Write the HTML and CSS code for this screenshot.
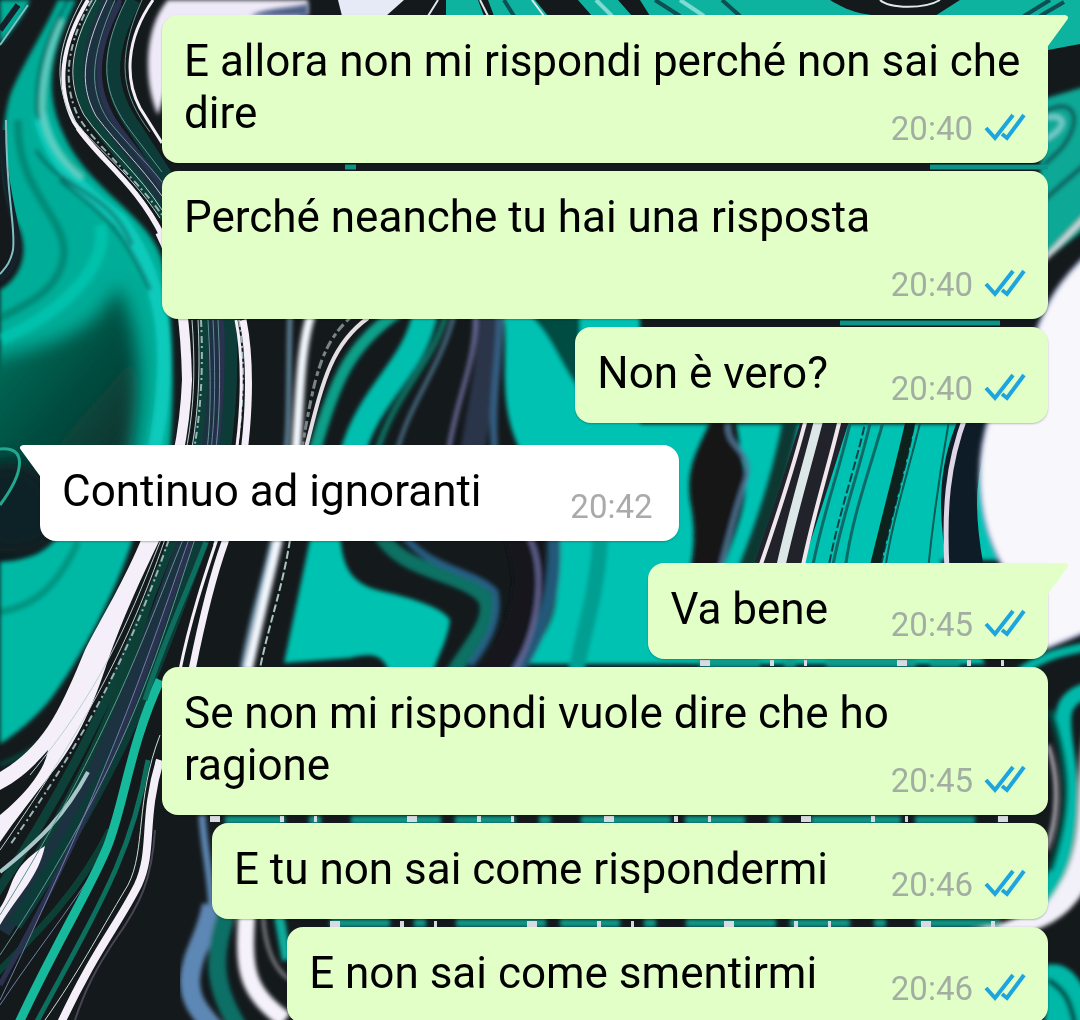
FILE: index.html
```html
<!DOCTYPE html>
<html lang="it">
<head>
<meta charset="utf-8">
<meta name="viewport" content="width=device-width, initial-scale=1">
<title>Chat</title>
<link rel="stylesheet" href="styles.css">
</head>
<body>
<svg class="wallpaper" viewBox="0 0 1080 1020" preserveAspectRatio="xMidYMid slice" aria-hidden="true">
  <defs>
    <filter id="soft" x="-10%" y="-10%" width="120%" height="120%"><feGaussianBlur stdDeviation="2"/></filter>
    <filter id="fine" x="-10%" y="-10%" width="120%" height="120%"><feGaussianBlur stdDeviation="0.7"/></filter>
    <filter id="deep" x="-20%" y="-20%" width="140%" height="140%"><feGaussianBlur stdDeviation="9"/></filter>
    <linearGradient id="pool" x1="0" y1="0" x2="1" y2="1"><stop offset="0" stop-color="#00806e"/><stop offset=".45" stop-color="#045848"/><stop offset="1" stop-color="#0a2b28"/></linearGradient>
  </defs>
  <rect width="1080" height="1020" fill="#14191c"/>

  <!-- upper left: teal river -->
  <g filter="url(#soft)">
    <path fill="#06ad98" d="M0 0H30C22 20 10 32 0 44ZM58 0H76C52 50 42 90 64 135C88 190 150 215 162 260C172 300 176 380 170 450H0V290C25 275 30 245 15 220C0 180 0 120 12 90C25 60 45 30 58 0Z"/>
    <path fill="none" stroke="#008b78" stroke-width="8" d="M18 120C16 190 64 215 64 252C62 290 25 305 0 318"/>
    <path fill="none" stroke="#00c2ac" stroke-width="12" d="M100 225C110 260 70 310 0 340"/>
    <path fill="none" stroke="#08cbbb" stroke-width="14" d="M40 115C50 160 80 190 120 220C150 260 166 310 164 370C162 410 158 430 154 450"/>
    <path fill="none" stroke="#65cfc4" stroke-width="5" d="M62 20C48 50 42 80 42 110C46 140 60 160 82 178"/>
    <path fill="none" stroke="#075f58" stroke-width="3" d="M68 0C42 45 34 80 38 120M36 150C60 190 110 190 132 245M60 180C90 205 120 220 150 290"/>
  </g>
  <path filter="url(#deep)" fill="url(#pool)" d="M-20 362C50 345 95 335 118 285C145 340 142 400 128 470H-20Z"/>
  <path filter="url(#deep)" fill="#0a2326" d="M-20 470C40 440 60 500 60 520C50 560 20 555 -20 552Z"/>
  <g fill="none" filter="url(#fine)">
    <path stroke="#16212c" stroke-width="6" d="M3 130C4 200 20 225 17 250C14 268 6 275 0 280M0 30L18 5"/>
    <path stroke="#80bfc2" stroke-width="2" d="M6 120C6 200 16 225 13 250C10 264 5 268 0 274M0 45L28 5"/>
    <path stroke="#20a88e" stroke-width="3" d="M0 449C26 446 26 470 0 505"/>
  </g>

  <!-- lower left: teal pool -->
  <g filter="url(#soft)">
    <path fill="#04b9a5" d="M0 562C40 560 50 545 60 535H134C118 590 80 660 50 700C35 718 15 735 0 744Z"/>
    <path fill="none" stroke="#009480" stroke-width="7" d="M0 612C40 605 60 580 78 542"/>
    <path fill="none" stroke="#005f4e" stroke-width="3" d="M0 765C50 745 70 720 98 660"/>
  </g>

  <!-- marbled bundle running down the left side -->
  <g fill="none" filter="url(#fine)">
    <path stroke="#1e3040" stroke-width="22" d="M112 0C80 60 85 95 110 130C150 185 210 245 214 330C220 450 205 500 188 542C160 620 120 740 0 930"/>
    <path stroke="#0d3b38" stroke-width="14" d="M134 0C102 60 110 95 136 130C180 200 218 245 230 330C233 440 215 500 202 542C170 620 140 740 15 925"/>
    <path stroke="#0e4138" stroke-width="9" d="M98 0C72 50 74 90 92 120C140 185 200 245 204 330C204 440 190 500 172 542C140 620 100 740 -5 895"/>
    <path stroke="#0c3f35" stroke-width="7" d="M150 600C120 700 80 790 -5 925M110 830C80 890 40 930 -5 975"/>
    <path stroke="#2c3150" stroke-width="5" d="M120 0C90 60 95 95 120 130C160 185 216 245 222 330C224 450 205 520 192 542C160 620 130 750 0 985"/>
    <path stroke="#f4eff8" stroke-width="4" d="M88 0C58 50 58 90 74 122C94 155 135 180 163 235"/>
    <path stroke="#f4eff8" stroke-width="5" d="M78 128C100 160 138 185 163 238"/>
    <path stroke="#f4eff8" stroke-width="10" d="M160 232C180 270 186 330 187 380C185 430 176 480 152 540"/>
    <path fill="#f4eff8" stroke="none" d="M143 535H162C140 580 122 620 108 660C92 710 75 745 50 775C35 795 15 820 0 842V815C25 795 45 770 48 750C35 765 20 780 0 790V772C45 745 60 710 85 650C100 620 125 580 143 535Z"/>
    <path fill="#f4eff8" stroke="none" d="M45 846C38 878 20 892 0 925V908C14 888 8 868 45 846Z"/>
    <path stroke="#a6c6c8" stroke-width="4" d="M0 872C40 840 65 815 88 772"/>
    <path stroke="#bcd1d2" stroke-width="1" d="M82 0C55 50 56 80 68 110C84 140 125 165 160 218M96 0C67 50 68 85 84 115C105 145 140 175 162 210M198 320C202 400 195 470 164 542C130 640 90 720 0 850M192 320C198 400 190 460 160 542C125 630 100 690 30 775M107 0C78 60 82 90 96 116C118 145 140 165 162 196"/>
    <path stroke="#9bb4b6" stroke-width="2" stroke-dasharray="7 3 2 4" d="M201 320C205 400 196 470 168 542C136 635 98 720 10 845M92 0C63 50 64 88 79 118C100 150 136 178 162 215M239 320C250 390 236 480 214 545"/>
    <path stroke="#629493" stroke-width="1" d="M126 0C96 60 104 95 130 130L162 172M142 0C115 60 122 95 150 132M115 0C88 60 90 92 108 120C128 145 145 160 162 182M208 320C215 440 205 490 182 542C150 620 110 740 0 915M218 320C224 440 212 490 194 542C158 650 130 760 0 955"/>
    <path stroke="#6f7ea4" stroke-width="1" d="M213 320C219 440 208 490 188 542C155 635 120 750 0 1000M120 820C95 880 50 930 0 1005"/>
    <path stroke="#17b99b" stroke-width="9" d="M160 680C130 745 125 800 108 845C90 890 60 935 18 1025"/>
    <path stroke="#08705f" stroke-width="5" d="M206 542C180 610 160 650 145 700M148 760C132 850 108 890 35 1025"/>
    <path stroke="#f4eff8" stroke-width="3" d="M153 0C125 40 125 80 140 108L162 143M236 320C248 380 238 480 216 542C205 575 190 620 180 670"/>
    <path stroke="#f4eff8" stroke-width="7" d="M243 320C255 380 246 480 225 542C213 575 202 620 192 670"/>
    <path stroke="#f4eff8" stroke-width="8" d="M160 760C142 820 154 850 138 885C118 925 95 950 60 1025"/>
    <path stroke="#c8dcda" stroke-width="1" d="M160 735C135 800 146 850 128 885C95 940 80 970 45 1020"/>
    <path stroke="#494454" stroke-width="2" d="M155 830C152 880 140 905 115 940C95 970 85 990 75 1020"/>
  </g>
  <path filter="url(#soft)" fill="#eeeaf8" d="M168 0H308V15H300V90H166L158 115C142 80 145 25 168 0Z"/>
  <path filter="url(#soft)" fill="#4d5f86" d="M250 16C265 8 290 8 308 4V16Z"/>
  <path filter="url(#fine)" fill="none" stroke="#e9e4ee" stroke-width="5" d="M172 166H196"/>

  <!-- top edge, above the first message -->
  <g filter="url(#fine)">
    <path fill="#e6e9f6" d="M338 0H404L386 16H342Z"/>
    <path fill="#11b39f" d="M446 0H478L484 16H446ZM488 0H535L548 16H494ZM578 0H618L632 16H592ZM640 0H830C850 12 860 14 880 16H650ZM960 0H1080V44L1048 50V16H935Z"/>
    <path fill="none" stroke="#dfe8ec" stroke-width="2" d="M438 0L428 16M480 0L488 16M532 0L544 16M880 0C890 9 925 9 940 0"/>
    <path fill="none" stroke="#7ddbd2" stroke-width="4" d="M596 0L612 16M680 0L704 16"/>
    <path fill="none" stroke="#0b4f52" stroke-width="4" d="M504 0L514 16M655 0L680 16M722 0L740 16M1024 16L1050 0M1040 16L1064 2"/>
  </g>

  <!-- central swirls -->
  <g filter="url(#soft)" fill="none">
    <path fill="#02c2b3" d="M503 310H640V424H1000V560H940L985 664H520C570 620 570 560 520 450C495 400 510 350 503 310Z"/>
    <path stroke="#6e9ab4" stroke-width="4" d="M290 315C288 380 290 440 284 460C280 540 250 610 242 670"/>
    <path stroke="#f3f8ff" stroke-width="9" d="M312 312C300 345 300 400 296 450C285 520 270 570 248 670"/>
    <path stroke="#08a089" stroke-width="12" d="M398 312C350 345 335 380 315 450"/>
    <path stroke="#04bfae" stroke-width="25" d="M426 310C415 370 370 390 352 455"/>
    <path stroke="#087060" stroke-width="6" d="M447 312C430 370 395 390 376 455"/>
    <path stroke="#5686a2" stroke-width="3" d="M455 312C440 370 410 400 396 455"/>
    <path stroke="#2a344a" stroke-width="24" d="M488 310C492 360 480 400 472 455"/>
    <path stroke="#6e6e9e" stroke-width="4" d="M475 310C478 360 455 400 448 455"/>
    <path stroke="#365f83" stroke-width="7" d="M500 310C500 360 490 400 495 455"/>
    <path fill="#064c42" d="M530 315H580V390C560 365 555 340 530 315Z"/>
    <path fill="#02c2b0" d="M311 535H340C343 570 352 585 385 592C420 600 445 610 450 620C448 640 438 655 430 680H392C385 655 375 652 350 658L284 663Z"/>
    <path stroke="#14191c" stroke-width="34" d="M520 530C540 590 530 620 490 680"/>
    <path stroke="#245878" stroke-width="13" d="M553 530C558 590 545 630 512 680"/>
    <path stroke="#67689a" stroke-width="4" d="M525 530C545 560 545 620 510 680"/>
    <path stroke="#087164" stroke-width="15" d="M378 530C400 575 460 570 485 598C495 620 470 645 452 675"/>
    <path stroke="#265f84" stroke-width="7" d="M400 530C425 570 475 570 495 592C500 615 490 640 470 665"/>
    <path stroke="#009f91" stroke-width="16" d="M600 540C597 600 580 640 575 680"/>
  </g>
  <g filter="url(#fine)" fill="none">
    <path stroke="#e3dfe4" stroke-width="4" d="M368 318C330 345 322 385 306 448"/>
    <path stroke="#7d8488" stroke-width="3" stroke-dasharray="5 4 9 3" d="M350 318C320 345 314 380 302 448"/>
    <path stroke="#a9c6bf" stroke-width="2" stroke-dasharray="8 3" d="M290 540C282 590 270 620 260 668"/>
  </g>

  <!-- centre right ribbons -->
  <g filter="url(#soft)">
    <path fill="#171519" d="M712 415C705 440 685 460 690 500C696 530 694 550 690 570H722C740 520 752 490 742 460L735 415Z"/>
    <path fill="none" stroke="#527797" stroke-width="4" d="M728 424C725 450 758 450 744 485C735 510 728 540 720 570"/>
    <path fill="none" stroke="#0a3833" stroke-width="16" d="M792 415C782 470 766 520 746 570"/>
  </g>
  <g fill="none" filter="url(#fine)">
    <path stroke="#20222b" stroke-width="46" d="M827 415C812 460 798 510 776 570"/>
    <path stroke="#f0e8ed" stroke-width="4" d="M807 415C793 470 778 515 759 570M841 415C828 470 813 515 802 570"/>
    <path stroke="#dce7e7" stroke-width="9" d="M820 415C806 470 792 515 780 570"/>
    <path stroke="#0b6b66" stroke-width="3" d="M872 415C860 470 842 515 832 570M885 415C870 470 852 515 845 570M852 415C840 470 822 515 812 570"/>
    <path stroke="#123f46" stroke-width="2" stroke-dasharray="9 3" d="M867 415C855 470 838 515 828 570M916 415C906 470 890 520 880 570"/>
    <path stroke="#0b201f" stroke-width="10" d="M912 415C902 460 886 520 874 570"/>
    <path stroke="#075b54" stroke-width="2" d="M922 415C909 470 892 520 885 570M950 415C940 470 933 520 928 570"/>
    <path stroke="#111a25" stroke-width="36" d="M980 415C955 465 955 510 966 570"/>
    <path stroke="#ded7e8" stroke-width="5" d="M966 415C947 465 944 510 947 570"/>
  </g>

  <!-- right edge -->
  <g filter="url(#soft)">
    <path fill="#0ba896" d="M1040 100L1090 85V225L1040 265Z"/>
    <path fill="none" stroke="#0d4e50" stroke-width="4" d="M1044 112C1075 95 1085 120 1060 150L1044 165M1044 200L1090 160"/>
    <path fill="none" stroke="#7fd3d6" stroke-width="4" d="M1044 140C1066 130 1070 112 1044 118"/>
    <path fill="none" stroke="#e6dfe8" stroke-width="4" d="M1040 264L1090 212"/>
    <path fill="#f8f7fc" stroke="#a9b1d3" stroke-width="3" d="M1090 252C1060 280 1048 300 1035 335L990 415C975 460 975 520 1005 570L1030 655L1090 630Z"/>
  </g>
  <path filter="url(#fine)" fill="none" stroke="#0d9486" stroke-width="5" d="M345 167H356M930 167H1048M840 323H1000"/>

  <!-- lower right -->
  <g filter="url(#soft)" fill="none">
    <path fill="#f2f0f9" d="M1090 710C1070 760 1090 830 1062 880C1040 910 1010 925 970 930H1035C1065 920 1080 900 1090 880Z"/>
    <path stroke="#05b6a4" stroke-width="9" d="M1020 672C1045 655 1060 652 1090 646"/>
    <path stroke="#05b9aa" stroke-width="16" d="M1090 690C1045 700 1070 740 1070 790C1070 850 1060 880 1030 910"/>
    <path stroke="#064b43" stroke-width="6" d="M1050 710C1070 770 1070 810 1050 870"/>
    <path stroke="#e8e1ed" stroke-width="3" d="M1048 745C1060 780 1058 820 1046 850"/>
    <path fill="#05b8a7" d="M1045 965C1070 960 1080 980 1090 1000V1030H1045Z"/>
    <path stroke="#063f3a" stroke-width="5" d="M1048 980C1065 990 1070 1000 1075 1025"/>
    <path stroke="#0a9c8c" stroke-width="8" d="M700 663H960M225 820H1000M330 923H1000" stroke-dasharray="60 24 12 30 90 14"/>
  </g>
  <path filter="url(#fine)" stroke="#d8dce2" stroke-width="6" d="M700 663H1040M210 819H1040M330 924H1000" stroke-dasharray="10 60 4 30 3 90"/>

  <!-- bottom left wave -->
  <g filter="url(#soft)" fill="none">
    <path stroke="#5d87b4" stroke-width="7" d="M202 815C204 850 212 880 212 915"/>
    <path stroke="#5d87b4" stroke-width="20" d="M212 905C206 940 192 950 190 980C190 1000 198 1010 215 1030"/>
    <path stroke="#087066" stroke-width="18" d="M228 910C210 960 215 990 240 1030"/>
    <path stroke="#f5f2fc" stroke-width="17" d="M247 910C243 970 245 990 285 1020"/>
    <path stroke="#0aae9d" stroke-width="10" d="M278 910L287 960"/>
    <path stroke="#d5d1d8" stroke-width="2" d="M263 915C265 950 275 970 290 980"/>
  </g>
</svg>

<svg class="symbols" aria-hidden="true">
  <symbol id="read" viewBox="0 0 42 30">
    <path d="M2 16L11 26L29 3M18 22L23 26L40 3" fill="none" stroke="#1da5e0" stroke-width="4"/>
  </symbol>
  <symbol id="tail" viewBox="0 0 21 34">
    <path d="M0 0H17Q22 1 19 5L0 31Z"/>
  </symbol>
</svg>

<main class="chat">
  <article class="bubble sent wide first">
    <svg class="tail"><use href="#tail"/></svg>
    <p class="text">E allora non mi rispondi perché non sai che dire</p>
    <div class="meta"><time>20:40</time><svg class="ticks" role="img" aria-label="Letto"><use href="#read"/></svg></div>
  </article>
  <article class="bubble sent wide">
    <p class="text">Perché neanche tu hai una risposta</p>
    <div class="meta"><time>20:40</time><svg class="ticks" role="img" aria-label="Letto"><use href="#read"/></svg></div>
  </article>
  <article class="bubble sent">
    <p class="text">Non è vero?</p>
    <div class="meta"><time>20:40</time><svg class="ticks" role="img" aria-label="Letto"><use href="#read"/></svg></div>
  </article>
  <article class="bubble received first">
    <svg class="tail"><use href="#tail"/></svg>
    <p class="text">Continuo ad ignoranti</p>
    <div class="meta"><time>20:42</time></div>
  </article>
  <article class="bubble sent first">
    <svg class="tail"><use href="#tail"/></svg>
    <p class="text">Va bene</p>
    <div class="meta"><time>20:45</time><svg class="ticks" role="img" aria-label="Letto"><use href="#read"/></svg></div>
  </article>
  <article class="bubble sent wide">
    <p class="text">Se non mi rispondi vuole dire che ho ragione</p>
    <div class="meta"><time>20:45</time><svg class="ticks" role="img" aria-label="Letto"><use href="#read"/></svg></div>
  </article>
  <article class="bubble sent">
    <p class="text">E tu non sai come rispondermi</p>
    <div class="meta"><time>20:46</time><svg class="ticks" role="img" aria-label="Letto"><use href="#read"/></svg></div>
  </article>
  <article class="bubble sent">
    <p class="text">E non sai come smentirmi&nbsp;</p>
    <div class="meta"><time>20:46</time><svg class="ticks" role="img" aria-label="Letto"><use href="#read"/></svg></div>
  </article>
</main>
</body>
</html>
```
FILE: styles.css
```css
* { box-sizing: border-box; }

body {
  margin: 0;
  height: 100vh;
  overflow: hidden;
  background: #14191c;
  color: #000;
  font-family: Roboto, "Liberation Sans", sans-serif;
}

.wallpaper {
  position: fixed;
  inset: 0;
  z-index: -1;
  width: 100%;
  height: 100%;
}

.symbols {
  position: absolute;
  width: 0;
  height: 0;
}

.chat {
  display: flex;
  flex-direction: column;
  gap: 8px;
  padding: 15px 32px 0 40px;
}

.bubble {
  position: relative;
  display: grid;
  flex-shrink: 0;
  max-width: calc(100% - 122px);
  padding: 20px 22px 24px 22px;
  border-radius: 16px;
  box-shadow: 0 1px 2px rgba(0, 0, 0, 0.25);
}

.sent {
  align-self: flex-end;
  background: #e1ffc7;
}

.received {
  align-self: flex-start;
  background: #fff;
}

.sent.first { border-top-right-radius: 0; }
.received.first { border-top-left-radius: 0; }

.received,
.received + .bubble { margin-top: 14px; }

.text {
  grid-area: 1 / 1;
  margin: 0;
  padding-right: 198px;
  font-size: 44px;
  line-height: 52px;
}

.received .text { padding-right: 175px; }

.wide { width: 100%; }

.wide .text {
  min-height: 104px;
  padding-right: 0;
}

.meta {
  grid-area: 1 / 1;
  place-self: end;
  display: flex;
  align-items: center;
  gap: 11px;
  margin-bottom: -10px;
  color: #a3aea3;
  font-size: 33px;
  line-height: 40px;
}

.received .meta {
  margin-right: 4px;
  color: #aaa;
}

.ticks {
  width: 42px;
  height: 30px;
  margin-bottom: 5px;
}

.tail {
  position: absolute;
  top: 0;
  left: 100%;
  width: 21px;
  height: 34px;
  fill: #e1ffc7;
}

.received .tail {
  right: 100%;
  left: auto;
  fill: #fff;
  transform: scaleX(-1);
}
```
